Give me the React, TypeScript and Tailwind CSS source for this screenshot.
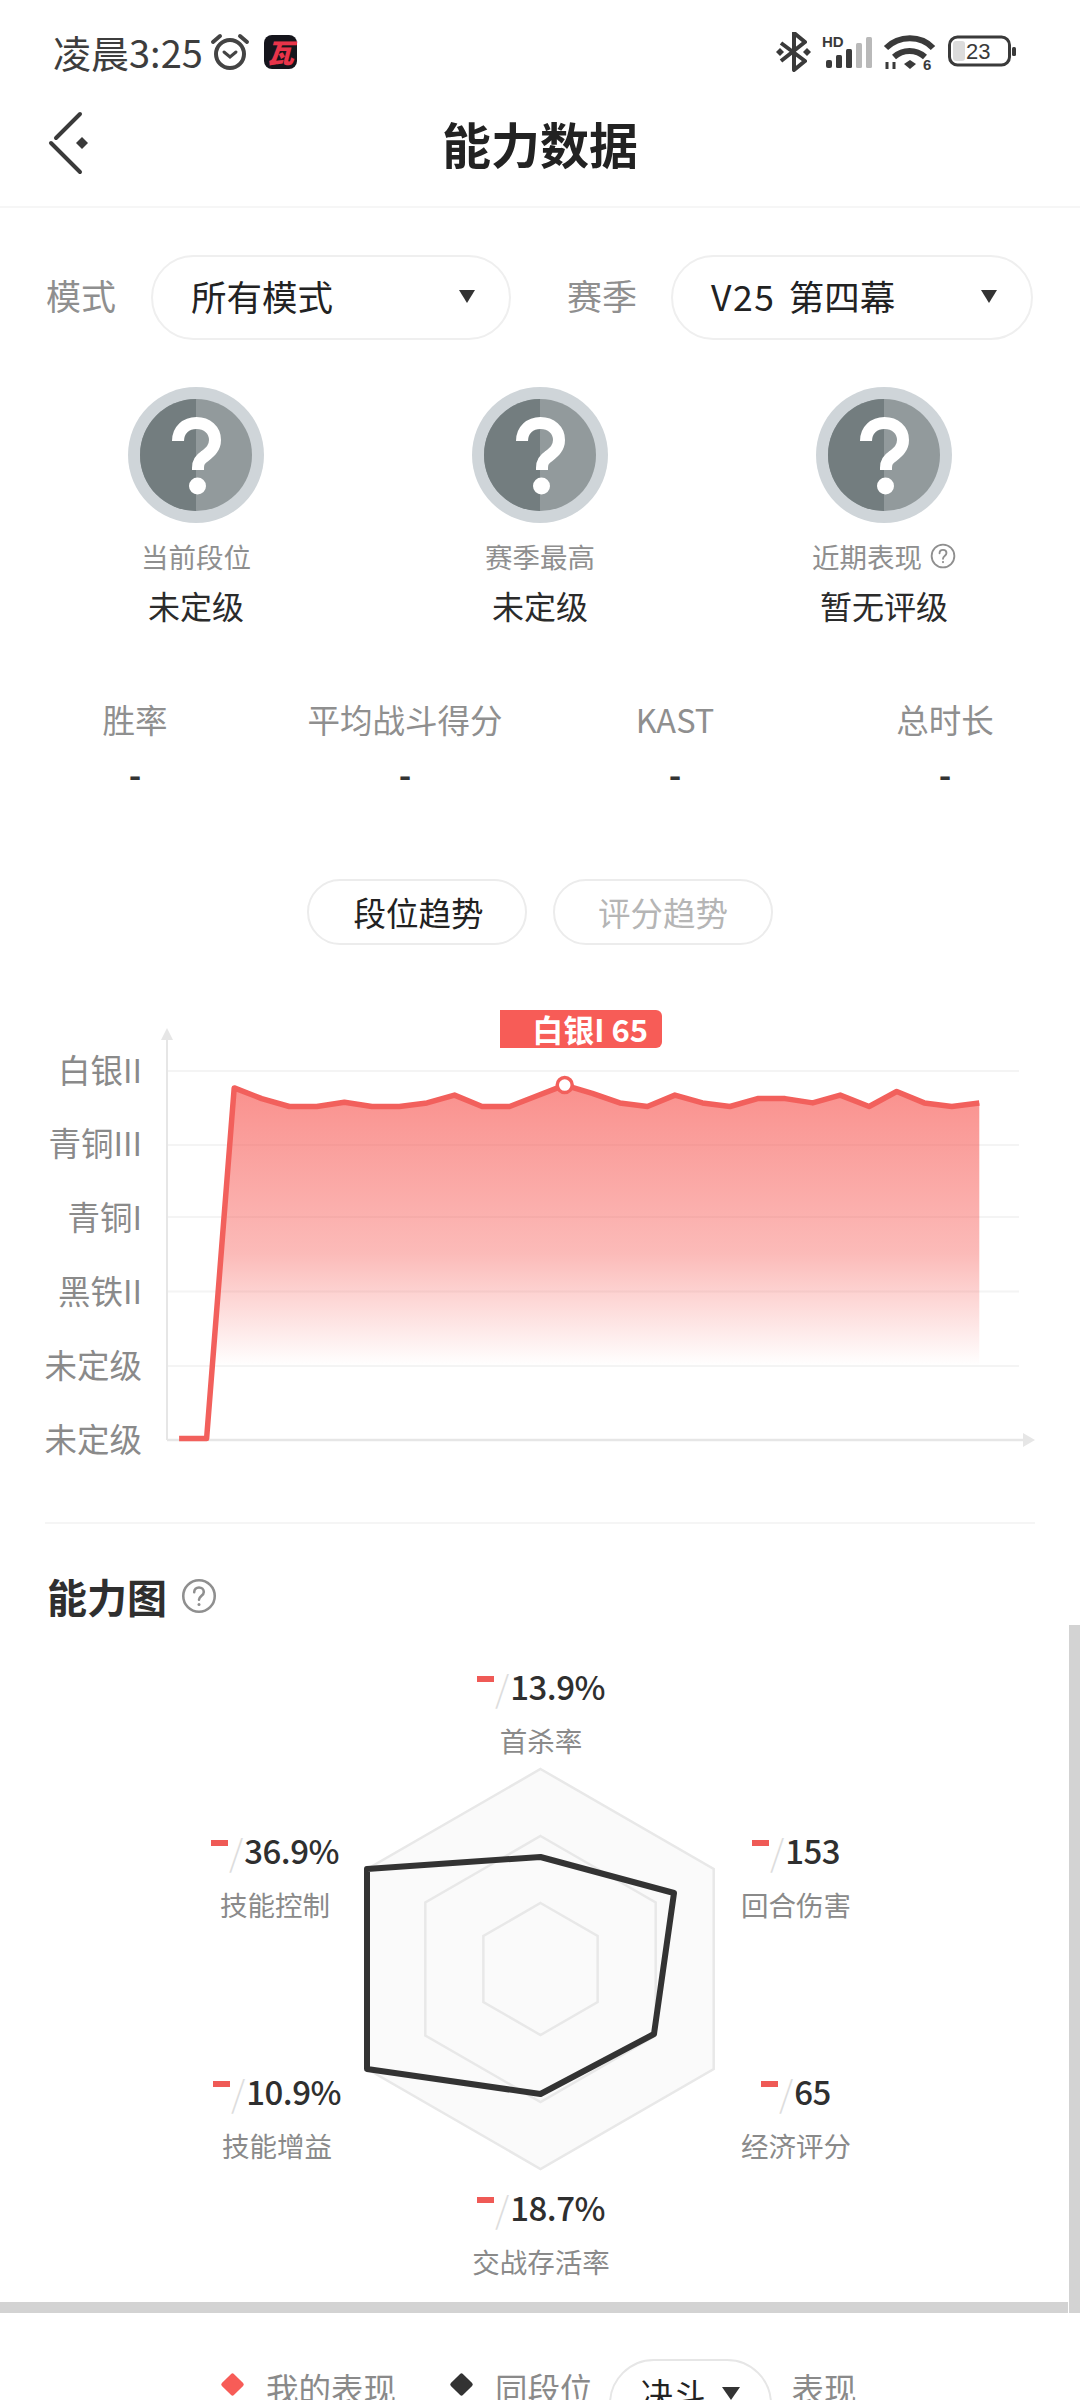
import React from "react";

const FONT = "font-['Noto_Sans_CJK_SC','Noto_Sans',sans-serif]";

const raw: [number, number][] = [[260,1287],[300,1287],[340,305],[380,335],[420,357],[460,357],[500,345],[540,357],[580,357],[620,347],[660,325],[700,357],[740,357],[780,327],[820,297],[860,320],[900,347],[940,357],[980,325],[1020,347],[1060,357],[1100,335],[1140,335],[1180,347],[1220,325],[1262,357],[1302,315],[1342,347],[1382,357],[1422,347]];
// chart svg origin: x=141, y=1011
const pts = raw.map(([x, y]) => [x / 1.452 - 141, y / 2.8 + 980 - 1011]);
const line = pts.map((p) => p[0].toFixed(1) + "," + p[1].toFixed(1)).join(" ");
const area = pts.slice(2).map((p) => p[0].toFixed(1) + "," + p[1].toFixed(1)).join(" ");
const baseY = 356;
const leftX = pts[1][0] + ((pts[1][1] - baseY) / (pts[1][1] - pts[2][1])) * (pts[2][0] - pts[1][0]);
const areaPoly = `${leftX.toFixed(1)},${baseY} ${area} ${pts[pts.length - 1][0].toFixed(1)},${baseY}`;

function Medal() {
  return (
    <svg width="136" height="136" viewBox="0 0 136 136">
      <circle cx="68" cy="68" r="68" fill="#cfd5d9" />
      <circle cx="68" cy="68" r="56" fill="#929a9c" />
      <path d="M68 12a56 56 0 0 0 0 112z" fill="#737d7f" />
      <path d="M50 54c0-11 8-18 18.500-18S87 43 87 53c0 8-5 12-10 16-5 3.500-7 6-7 12v2" fill="none" stroke="#fff" strokeWidth="12" />
      <circle cx="69.500" cy="99" r="8.500" fill="#fff" />
    </svg>
  );
}

function RankCol({ label, value, help }: { label: string; value: string; help?: boolean }) {
  return (
    <div className="flex flex-col items-center">
      <Medal />
      <div className="mt-[15px] flex h-[36px] items-center gap-[8px] text-[27.500px] leading-[36px] text-[#8f8f8f]">
        {label}
        {help && <HelpIcon size={26} />}
      </div>
      <div className="mt-[10px] text-[32px] leading-[42px] text-[#2b2b2b]">{value}</div>
    </div>
  );
}

function HelpIcon({ size }: { size: number }) {
  return (
    <svg width={size} height={size} viewBox="0 0 24 24" fill="none" stroke="#8f8f8f" strokeWidth="1.700">
      <circle cx="12" cy="12" r="10.500" />
      <path d="M8.800 9.500c0-2 1.400-3.200 3.200-3.200s3.200 1.200 3.200 3c0 2.700-3.200 2.800-3.200 5.200" strokeLinecap="round" />
      <circle cx="12" cy="17.600" r="1" fill="#8f8f8f" stroke="none" />
    </svg>
  );
}

function Stat({ label }: { label: string }) {
  return (
    <div className="flex flex-col items-center">
      <div className="text-[32.500px] leading-[44px] text-[#8f8f8f]">{label}</div>
      <div className="mt-[9px] text-[34px] font-bold leading-[48px] text-[#333]">-</div>
    </div>
  );
}

function Select({ children, w }: { children: React.ReactNode; w: string }) {
  return (
    <div className={`flex h-[85px] items-center justify-between rounded-[43px] border-2 border-[#efefef] pb-[4px] pl-[38px] pr-[34px] ${w}`}>
      <span className="text-[35.500px] leading-[48px] text-[#222]">{children}</span>
      <span className="mt-[2px] h-0 w-0 border-x-[8px] border-t-[13px] border-x-transparent border-t-[#333]" />
    </div>
  );
}

function RadarLabel({ v, label, cls, dashW = 17 }: { v: string; label: string; cls: string; dashW?: number }) {
  return (
    <div className={`absolute flex flex-col items-center ${cls}`}>
      <div className="flex h-[44px] items-center">
        <span className="mb-[14px] h-[6px] bg-[#ef5a56]" style={{ width: dashW }} />
        <span className="mx-[1px] text-[36px] font-light leading-none text-[#dddddd]">/</span>
        <span className="text-[33px] font-medium leading-[44px] tracking-[-0.5px] text-[#2f2f2f]">{v}</span>
      </div>
      <div className="mt-[14px] whitespace-nowrap text-[27.500px] leading-[36px] text-[#8a8a8a]">{label}</div>
    </div>
  );
}

function hex(cx: number, cy: number, r: number) {
  const a = r * 0.866;
  const b = r / 2;
  return `${cx},${cy - r} ${cx + a},${cy - b} ${cx + a},${cy + b} ${cx},${cy + r} ${cx - a},${cy + b} ${cx - a},${cy - b}`;
}

export default function App() {
  return (
    <div className={`relative h-[2400px] w-[1080px] overflow-hidden bg-white ${FONT}`}>
      {/* status bar */}
      <div className="flex h-[80px] items-center justify-between pl-[53px] pr-[64px] pt-[24px]">
        <div className="flex items-center">
          <span className="text-[38px] leading-[48px] text-[#3d3d3d]">凌晨3:25</span>
          <svg className="ml-[7px]" width="40" height="38" viewBox="0 0 40 38" fill="none" stroke="#444" strokeWidth="4">
            <circle cx="20" cy="21" r="14" />
            <path d="M14 19l6 5 6-5" strokeWidth="3" strokeLinecap="round" />
            <path d="M3 9l7-6M37 9l-7-6" strokeLinecap="round" />
          </svg>
          <div className="relative ml-[14px] flex h-[34px] w-[33px] items-center justify-center rounded-[8px] bg-[#15151c]">
            <span className="text-[27px] font-black italic leading-[30px] text-[#e8344a]">瓦</span>
          </div>
        </div>
        <div className="flex items-center">
          <svg width="240" height="40" viewBox="0 0 240 40" fill="none">
            {/* origin x=776 */}
            <path d="M5 11l24 18-11 9V1l11 9L5 29" stroke="#3a3a3a" strokeWidth="4" strokeLinejoin="round" />
            <path d="M0 20l4-4 4 4-4 4zM27 20l4-4 4 4-4 4z" fill="#3a3a3a" />
            <text x="46" y="15" fontSize="15" fontWeight="700" fill="#3a3a3a" fontFamily="Liberation Sans">HD</text>
            <rect x="50" y="28" width="6" height="8" rx="2" fill="#3a3a3a" />
            <rect x="60" y="23" width="6" height="13" rx="1.500" fill="#3a3a3a" />
            <rect x="70" y="17" width="6" height="19" rx="1.500" fill="#3a3a3a" />
            <rect x="80" y="11" width="6" height="25" rx="1.500" fill="#b9b9b9" />
            <rect x="90" y="5" width="6" height="31" rx="1.500" fill="#b9b9b9" />
            <path d="M110 16c13-13 35-13 47 0" stroke="#3a3a3a" strokeWidth="6" />
            <path d="M118 25c9-8 22-8 31 0" stroke="#3a3a3a" strokeWidth="6" />
            <path d="M128 32l6-4 6 4-6 5z" fill="#3a3a3a" />
            <path d="M111 30v7M118 30v7" stroke="#3a3a3a" strokeWidth="3" />
            <text x="147" y="38" fontSize="15" fontWeight="700" fill="#3a3a3a" fontFamily="Liberation Sans">6</text>
            <rect x="173.500" y="5" width="60" height="28" rx="8" stroke="#3a3a3a" strokeWidth="3" />
            <rect x="177" y="9" width="12" height="20" rx="3" fill="#dcdcdc" />
            <text x="190" y="27" fontSize="22" fill="#3a3a3a" fontFamily="Liberation Sans">23</text>
            <rect x="236" y="15" width="4" height="9" rx="1.500" fill="#3a3a3a" />
          </svg>
        </div>
      </div>

      {/* header */}
      <div className="relative flex h-[128px] items-center justify-center border-b-2 border-[#f6f6f6]">
        <svg className="absolute left-[46px] top-[30px]" width="46" height="66" viewBox="0 0 46 66" fill="none" stroke="#3a3a3a" strokeWidth="4" strokeLinecap="round">
          <path d="M34 4L10 28M5 33l29 29" />
          <path d="M36 27l6 6-6 6-6-6z" fill="#3a3a3a" stroke="none" />
        </svg>
        <h1 className="text-[49px] font-bold leading-[64px] text-[#222]">能力数据</h1>
      </div>

      {/* filters */}
      <div className="mt-[47px] flex items-center pl-[46px]">
        <span className="pb-[4px] text-[35px] text-[#8f8f8f]">模式</span>
        <div className="ml-[35px]"><Select w="w-[360px]">所有模式</Select></div>
        <span className="ml-[56px] pb-[4px] text-[35px] text-[#8f8f8f]">赛季</span>
        <div className="ml-[34px]"><Select w="w-[362px]"><span className="tracking-[1.500px] [word-spacing:4px]">V25 </span>第四幕</Select></div>
      </div>

      {/* ranks */}
      <div className="mt-[47px] grid grid-cols-3 px-[24px]">
        <RankCol label="当前段位" value="未定级" />
        <RankCol label="赛季最高" value="未定级" />
        <RankCol label="近期表现" value="暂无评级" help />
      </div>

      {/* stats */}
      <div className="mt-[71px] grid grid-cols-4">
        <Stat label="胜率" />
        <Stat label="平均战斗得分" />
        <Stat label="KAST" />
        <Stat label="总时长" />
      </div>

      {/* tabs */}
      <div className="mt-[81px] flex justify-center gap-[26px]">
        <div className="flex h-[66px] w-[220px] items-center justify-center rounded-[33px] border-2 border-[#ececec] pl-[3px] text-[32.500px] text-[#222]">段位趋势</div>
        <div className="flex h-[66px] w-[220px] items-center justify-center rounded-[33px] border-2 border-[#ececec] text-[32.500px] text-[#b5b5b5]">评分趋势</div>
      </div>

      {/* chart */}
      <div className="relative mt-[65px] flex h-[470px]">
        <div className="flex w-[142px] flex-col items-end pt-[22px] text-[32.500px] text-[#8a8a8a]">
          {["白银II", "青铜III", "青铜I", "黑铁II", "未定级", "未定级"].map((t, i) => (
            <div key={i} className="flex h-[73.800px] items-center whitespace-nowrap leading-none">{t}</div>
          ))}
        </div>
        <svg className="-ml-[1px]" width="939" height="470" viewBox="0 0 939 470" fill="none">
          <defs>
            <linearGradient id="ar" x1="0" y1="0" x2="0" y2="1">
              <stop offset="0" stopColor="#f75c57" stopOpacity="0.68" />
              <stop offset="0.6" stopColor="#f75c57" stopOpacity="0.42" />
              <stop offset="1" stopColor="#f75c57" stopOpacity="0" />
            </linearGradient>
          </defs>
          {[61, 135, 207, 281.500, 356].map((y) => (
            <line key={y} x1="26" x2="878" y1={y} y2={y} stroke="#f4f4f4" strokeWidth="2" />
          ))}
          <polygon points={areaPoly} fill="url(#ar)" />
          <line x1="26" x2="26" y1="22" y2="430" stroke="#e6e6e6" strokeWidth="2" />
          <path d="M26 18l-6 12h12z" fill="#e6e6e6" />
          <line x1="26" x2="890" y1="430" y2="430" stroke="#e6e6e6" strokeWidth="2.500" />
          <path d="M894 430l-12-7v14z" fill="#e6e6e6" />
          <polyline points={line} stroke="#f2605c" strokeWidth="5.500" strokeLinejoin="round" />
          <circle cx={pts[14][0]} cy={pts[14][1]} r="7.500" fill="#fff" stroke="#f2605c" strokeWidth="3.500" />
        </svg>
        <div className="absolute left-[500px] top-0 flex h-[38px] w-[162px] items-center justify-end rounded-r-[6px] bg-[#f75c57] pb-[2px] pr-[14px] text-[31px] font-bold leading-none text-white">
          白银I 65
        </div>
      </div>

      <div className="mx-[45px] mt-[42px] h-[2px] bg-[#f5f5f5]" />

      {/* ability heading */}
      <div className="mt-[44px] flex items-center pl-[47px]">
        <span className="text-[40px] font-bold leading-[56px] text-[#2f2f2f]">能力图</span>
        <span className="ml-[14px]"><HelpIcon size={36} /></span>
      </div>

      {/* radar */}
      <div className="relative h-[678px]">
        <svg className="absolute left-[340px] top-[143px]" width="402" height="404" viewBox="340 1768 402 404" fill="none">
          <polygon points={hex(540.5, 1970, 200)} fill="#fafafa" stroke="#e8e8e8" strokeWidth="2.500" />
          <polygon points={hex(540.5, 1970, 133)} fill="#fafafa" stroke="#e8e8e8" strokeWidth="2.500" />
          <polygon points={hex(540.5, 1970, 66)} fill="#fafafa" stroke="#e8e8e8" strokeWidth="2.500" />
          <polygon points="540.5,1858 674,1894 654,2035 540.5,2095 367,2070 367,1870" stroke="#333" strokeWidth="6" strokeLinejoin="round" />
        </svg>
        <RadarLabel v="13.9%" label="首杀率" cls="left-[477px] top-[40px] w-[128px]" />
        <RadarLabel v="36.9%" label="技能控制" cls="left-[208px] top-[204px] w-[134px]" />
        <RadarLabel v="153" label="回合伤害" cls="left-[752px] top-[204px] w-[88px]" />
        <RadarLabel v="10.9%" label="技能增益" cls="left-[212px] top-[445px] w-[130px]" />
        <RadarLabel v="65" label="经济评分" cls="left-[760px] top-[445px] w-[72px]" />
        <RadarLabel v="18.7%" label="交战存活率" cls="left-[477px] top-[561px] w-[128px]" />
      </div>

      {/* horizontal scrollbar */}
      <div className="h-[11px] w-[1068px] bg-[#d3d3d3]" />

      {/* legend */}
      <div className="mt-[46px] flex items-start pl-[224px]">
        <span className="mt-[17px] h-[17px] w-[17px] rotate-45 rounded-[2px] bg-[#f75c57]" />
        <span className="ml-[25px] text-[32.500px] leading-[58px] text-[#8a8a8a]">我的表现</span>
        <span className="ml-[57px] mt-[17px] h-[17px] w-[17px] rotate-45 rounded-[2px] bg-[#333]" />
        <span className="ml-[25px] text-[32.500px] leading-[58px] text-[#8a8a8a]">同段位</span>
        <div className="ml-[16px] flex h-[90px] w-[163px] items-start justify-center gap-[16px] rounded-[45px] border-2 border-[#e6e6e6] pt-[3px]">
          <span className="text-[32.500px] leading-[58px] text-[#222]">决斗</span>
          <span className="mt-[23px] h-0 w-0 border-x-[9px] border-t-[13px] border-x-transparent border-t-[#333]" />
        </div>
        <span className="ml-[20px] text-[32.500px] leading-[58px] text-[#8a8a8a]">表现</span>
      </div>

      {/* vertical scrollbar */}
      <div className="absolute left-[1069px] top-[1625px] h-[688px] w-[11px] bg-[#d3d3d3]" />
    </div>
  );
}
